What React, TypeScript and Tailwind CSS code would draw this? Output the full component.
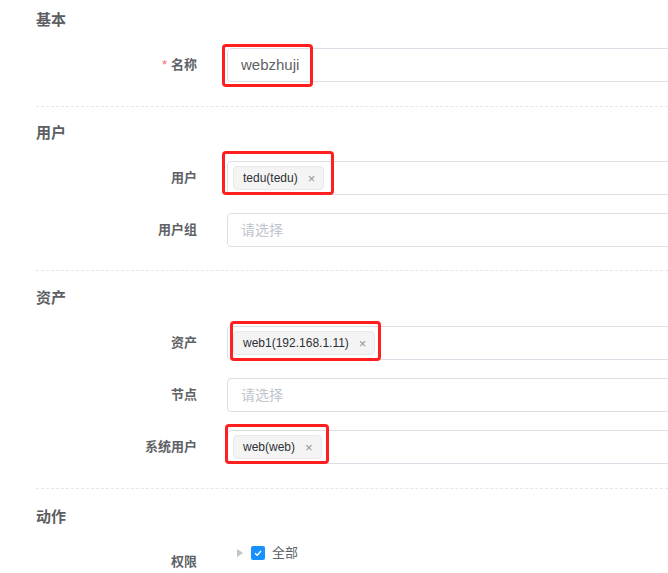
import React from "react";

type Tag = { text: string };

const font = "font-['Liberation_Sans','Noto_Sans_CJK_SC',sans-serif]";

function Divider() {
  return <div className="ml-[36px] border-t border-dashed border-[#e4e7ed]" />;
}

function SectionTitle({ children, className = "" }: { children: React.ReactNode; className?: string }) {
  return (
    <div className={`pl-[36px] text-[15px] leading-[20px] font-bold text-[#5c5e63] ${className}`}>{children}</div>
  );
}

function Row({
  label,
  required,
  className = "",
  children,
}: {
  label: string;
  required?: boolean;
  className?: string;
  children: React.ReactNode;
}) {
  return (
    <div className={`flex ${className}`}>
      <div className="w-[197px] shrink-0 text-right text-[13px] leading-[34px] font-bold text-[#606266]">
        {required && <span className="mr-[4px] text-[#f56c6c] font-normal">*</span>}
        {label}
      </div>
      <div className="ml-[30px] relative">{children}</div>
    </div>
  );
}

function Box({ className }: { className: string }) {
  return <div className={`absolute border-[3px] border-[#ff1f1f] rounded-[4px] pointer-events-none ${className}`} />;
}

function TagInput({ tags }: { tags: Tag[] }) {
  return (
    <div className="w-[460px] h-[34px] border border-[#dcdfe6] rounded-[4px] flex items-center pl-[5px]">
      {tags.map((t) => (
        <span
          key={t.text}
          className="h-[24px] flex items-center pl-[9px] pr-[8px] bg-[#f4f4f5] border border-[#e9e9eb] rounded-[4px] text-[12px] text-[#2f3033]"
        >
          {t.text}
          <span className="ml-[10px] text-[13px] leading-none text-[#909399]">×</span>
        </span>
      ))}
    </div>
  );
}

function Placeholder() {
  return (
    <div className="w-[460px] h-[34px] border border-[#dcdfe6] rounded-[4px] flex items-center pl-[13px] text-[14px] text-[#c0c4cc]">
      请选择
    </div>
  );
}

export default function App() {
  return (
    <div className={`w-[668px] h-[573px] overflow-hidden bg-white ${font}`}>
      <SectionTitle className="pt-[10px]">基本</SectionTitle>
      <Row label="名称" required className="mt-[18px]">
        <div className="w-[460px] h-[34px] border border-[#dcdfe6] rounded-[4px] flex items-center pl-[13px] text-[15px] text-[#606266]">
          webzhuji
        </div>
        <Box className="left-[-5px] top-[-4px] w-[91px] h-[43px]" />
      </Row>
      <div className="mt-[24px]">
        <Divider />
      </div>

      <SectionTitle className="mt-[16px]">用户</SectionTitle>
      <Row label="用户" className="mt-[18px]">
        <TagInput tags={[{ text: "tedu(tedu)" }]} />
        <Box className="left-[-5px] top-[-10px] w-[112px] h-[44px]" />
      </Row>
      <Row label="用户组" className="mt-[18px]">
        <Placeholder />
      </Row>
      <div className="mt-[23px]">
        <Divider />
      </div>

      <SectionTitle className="mt-[17px]">资产</SectionTitle>
      <Row label="资产" className="mt-[18px]">
        <TagInput tags={[{ text: "web1(192.168.1.11)" }]} />
        <Box className="left-[3px] top-[-5px] w-[151px] h-[40px]" />
      </Row>
      <Row label="节点" className="mt-[18px]">
        <Placeholder />
      </Row>
      <Row label="系统用户" className="mt-[18px]">
        <TagInput tags={[{ text: "web(web)" }]} />
        <Box className="left-[-2px] top-[-6px] w-[104px] h-[40px]" />
      </Row>
      <div className="mt-[24px]">
        <Divider />
      </div>

      <SectionTitle className="mt-[18px]">动作</SectionTitle>
      <div className="flex mt-[18px]">
        <div className="w-[197px] shrink-0 text-right text-[13px] leading-[34px] font-bold text-[#606266]">权限</div>
        <div className="ml-[40px] flex items-start pt-[1px]">
          <svg width="6" height="8" viewBox="0 0 6 8" className="mt-[3px]">
            <path d="M0 0 L6 4 L0 8 Z" fill="#c0c4cc" />
          </svg>
          <span className="ml-[8px] w-[14px] h-[14px] rounded-[2px] bg-[#1890ff] flex items-center justify-center">
            <svg width="10" height="10" viewBox="0 0 10 10">
              <path d="M2 5.2 L4.2 7.2 L8 3" stroke="#fff" strokeWidth="1.4" fill="none" />
            </svg>
          </span>
          <span className="ml-[7px] text-[13px] leading-[14px] text-[#606266]">全部</span>
        </div>
      </div>
    </div>
  );
}
